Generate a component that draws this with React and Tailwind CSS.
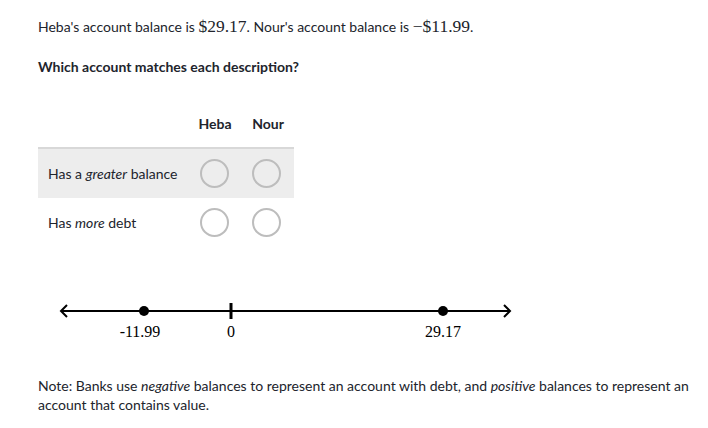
export default function App() {
  const sans = { fontFamily: "Lato, 'Noto Sans', sans-serif" };
  const serif = { fontFamily: "'Liberation Serif', 'DejaVu Serif', serif" };
  const Radio = () => <div className="w-[29px] h-[29px] rounded-full border-2 border-[#bdbdbd]" />;
  return (
    <div className="w-[708px] h-[428px] bg-white text-[#21242c] overflow-hidden" style={sans}>
      <div className="pl-[38px] pr-[16px]">
        <p className="pt-[16px] text-[14px] leading-[20px]">
          Heba's account balance is <span className="text-[17.5px]" style={serif}>$29.17</span>. Nour's account balance is{" "}
          <span className="text-[17.5px]" style={serif}>−$11.99</span>.
        </p>
        <p className="mt-[20px] text-[14px] leading-[20px] font-bold">Which account matches each description?</p>

        <div className="mt-[32px] w-[256px]">
          <div className="flex h-[38px] items-start pt-[5px] text-[14px] leading-[20px] font-bold">
            <div className="w-[150px] shrink-0" />
            <div className="w-[54px] shrink-0 text-center">Heba</div>
            <div className="w-[52px] shrink-0 text-center">Nour</div>
          </div>
          <div className="border-t-2 border-[#d8d8d8]">
            <div className="flex h-[49px] items-center bg-[#ededed] text-[14px]">
              <div className="w-[150px] shrink-0 pl-[10px] whitespace-nowrap">Has a <i>greater</i> balance</div>
              <div className="w-[52px] shrink-0 flex justify-center"><Radio /></div>
              <div className="w-[52px] shrink-0 flex justify-center"><Radio /></div>
            </div>
            <div className="flex h-[49px] items-center text-[14px]">
              <div className="w-[150px] shrink-0 pl-[10px] whitespace-nowrap">Has <i>more</i> debt</div>
              <div className="w-[52px] shrink-0 flex justify-center"><Radio /></div>
              <div className="w-[52px] shrink-0 flex justify-center"><Radio /></div>
            </div>
          </div>
        </div>

        <div className="mt-[45px]">
          <svg width="490" height="50" viewBox="38 290 490 50" className="block">
            <line x1="61" y1="309" x2="510" y2="309" stroke="#000" strokeWidth="2" />
            <path d="M67 303 L61 309 L67 315" fill="none" stroke="#000" strokeWidth="2" />
            <path d="M504 303 L510 309 L504 315" fill="none" stroke="#000" strokeWidth="2" />
            <line x1="231" y1="301" x2="231" y2="317" stroke="#000" strokeWidth="3" />
            <circle cx="144" cy="309" r="5" fill="#000" />
            <circle cx="443" cy="309" r="5" fill="#000" />
            <text x="140" y="335" textAnchor="middle" fontSize="16" style={serif} fill="#000">-11.99</text>
            <text x="231" y="335" textAnchor="middle" fontSize="16" style={serif} fill="#000">0</text>
            <text x="443" y="335" textAnchor="middle" fontSize="16" style={serif} fill="#000">29.17</text>
          </svg>
        </div>

        <p className="mt-[34px] text-[14px] leading-[19px]">
          Note: Banks use <i>negative</i> balances to represent an account with debt, and <i>positive</i> balances to represent an account that contains value.
        </p>
      </div>
    </div>
  );
}
